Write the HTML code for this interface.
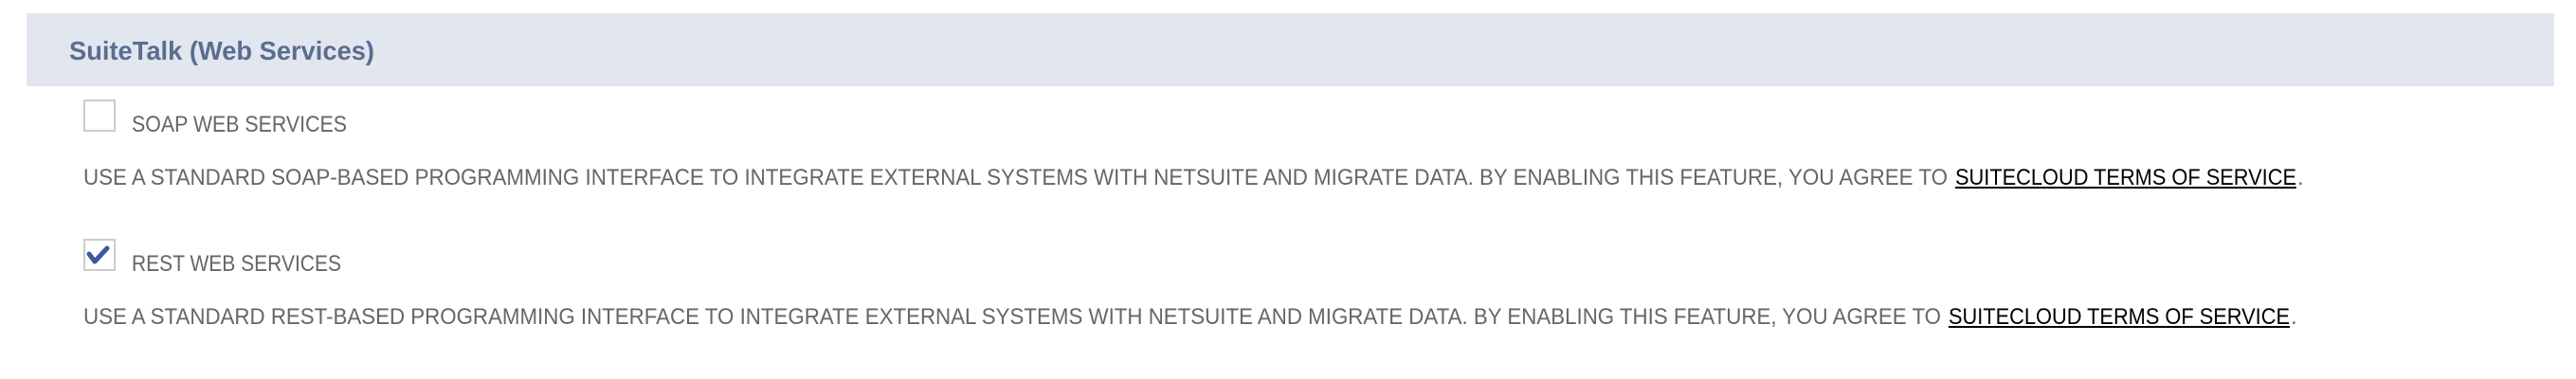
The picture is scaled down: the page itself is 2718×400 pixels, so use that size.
<!DOCTYPE html>
<html><head><meta charset="utf-8"><style>
html,body{margin:0;padding:0;background:#fff;width:2718px;height:400px;overflow:hidden}
</style></head><body>
<svg width="2718" height="400" xmlns="http://www.w3.org/2000/svg" style="display:block">
<rect x="28" y="14" width="2667" height="77" fill="#e1e6ef"/>
<text x="73" y="63" font-family="Liberation Sans, sans-serif" font-size="28" font-weight="bold" fill="#5b6d8f" textLength="322" lengthAdjust="spacingAndGlyphs">SuiteTalk (Web Services)</text>

<rect x="89" y="106" width="32" height="32" fill="#fff" stroke="#cccccc" stroke-width="2"/>
<text x="139" y="139" font-family="Liberation Sans, sans-serif" font-size="24" fill="#666" textLength="227" lengthAdjust="spacingAndGlyphs">SOAP WEB SERVICES</text>
<text x="88" y="195" font-family="Liberation Sans, sans-serif" font-size="24" fill="#666" textLength="1967" lengthAdjust="spacingAndGlyphs">USE A STANDARD SOAP-BASED PROGRAMMING INTERFACE TO INTEGRATE EXTERNAL SYSTEMS WITH NETSUITE AND MIGRATE DATA. BY ENABLING THIS FEATURE, YOU AGREE TO</text>
<text x="2063" y="195" font-family="Liberation Sans, sans-serif" font-size="24" fill="#000" textLength="360" lengthAdjust="spacingAndGlyphs">SUITECLOUD TERMS OF SERVICE</text>
<rect x="2063" y="197" width="360" height="2" fill="#000"/>
<text x="2424" y="195" font-family="Liberation Sans, sans-serif" font-size="24" fill="#666">.</text>

<rect x="89" y="253" width="32" height="32" fill="#fff" stroke="#cccccc" stroke-width="2"/>
<path d="M94 268 L100 276 L113 262" fill="none" stroke="#3a5a9c" stroke-width="5" stroke-linecap="round" stroke-linejoin="round"/>
<text x="139" y="286" font-family="Liberation Sans, sans-serif" font-size="24" fill="#666" textLength="221" lengthAdjust="spacingAndGlyphs">REST WEB SERVICES</text>
<text x="88" y="342" font-family="Liberation Sans, sans-serif" font-size="24" fill="#666" textLength="1960" lengthAdjust="spacingAndGlyphs">USE A STANDARD REST-BASED PROGRAMMING INTERFACE TO INTEGRATE EXTERNAL SYSTEMS WITH NETSUITE AND MIGRATE DATA. BY ENABLING THIS FEATURE, YOU AGREE TO</text>
<text x="2056" y="342" font-family="Liberation Sans, sans-serif" font-size="24" fill="#000" textLength="360" lengthAdjust="spacingAndGlyphs">SUITECLOUD TERMS OF SERVICE</text>
<rect x="2056" y="344" width="360" height="2" fill="#000"/>
<text x="2417" y="342" font-family="Liberation Sans, sans-serif" font-size="24" fill="#666">.</text>
</svg>
</body></html>
